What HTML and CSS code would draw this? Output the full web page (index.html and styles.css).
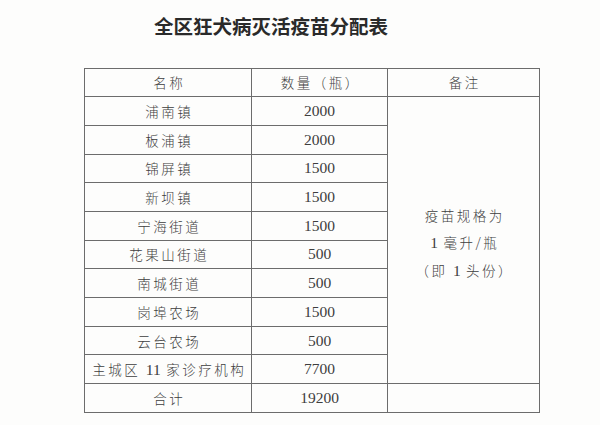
FILE: index.html
```html
<!DOCTYPE html>
<html lang="zh-CN">
<head>
<meta charset="utf-8">
<title>全区狂犬病灭活疫苗分配表</title>
<link rel="stylesheet" href="styles.css">
</head>
<body>
<div class="page">
  <h1 class="title">全区狂犬病灭活疫苗分配表</h1>
  <table class="alloc">
    <colgroup>
      <col class="c-name">
      <col class="c-num">
      <col class="c-note">
    </colgroup>
    <thead>
      <tr><th class="cjk">名称</th><th class="cjk">数量（瓶）</th><th class="cjk">备注</th></tr>
    </thead>
    <tbody>
      <tr><td class="cjk">浦南镇</td><td class="num">2000</td><td class="note" rowspan="10"><div class="note-text"><p>疫苗规格为</p><p><span class="n">1</span> 毫升/瓶</p><p>（即 <span class="n">1</span> 头份）</p></div></td></tr>
      <tr><td class="cjk">板浦镇</td><td class="num">2000</td></tr>
      <tr><td class="cjk">锦屏镇</td><td class="num">1500</td></tr>
      <tr><td class="cjk">新坝镇</td><td class="num">1500</td></tr>
      <tr><td class="cjk">宁海街道</td><td class="num">1500</td></tr>
      <tr><td class="cjk">花果山街道</td><td class="num">500</td></tr>
      <tr><td class="cjk">南城街道</td><td class="num">500</td></tr>
      <tr><td class="cjk">岗埠农场</td><td class="num">1500</td></tr>
      <tr><td class="cjk">云台农场</td><td class="num">500</td></tr>
      <tr><td class="cjk">主城区 <span class="n">11</span> 家诊疗机构</td><td class="num">7700</td></tr>
      <tr><td class="cjk">合计</td><td class="num">19200</td><td></td></tr>
    </tbody>
  </table>
</div>
</body>
</html>
```
FILE: styles.css
```css
html, body {
  margin: 0;
  padding: 0;
  background: #fdfdfc;
}
.page {
  width: 600px;
  height: 425px;
  overflow: hidden;
  color: #3e3e3e;
  font-family: "Noto Sans CJK SC", sans-serif;
}
.title {
  margin: 0;
  padding-top: 12px;
  padding-right: 58px;
  height: 67.5px;
  box-sizing: border-box;
  text-align: center;
  font-size: 19.5px;
  line-height: 28px;
  font-weight: 700;
  color: #2a2a2a;
  letter-spacing: 0;
}
.alloc {
  margin-left: 84px;
  border-collapse: collapse;
  table-layout: fixed;
  width: 455px;
}
.c-name { width: 167px; }
.c-num { width: 136px; }
.c-note { width: 152px; }
.alloc tr { height: 28.7px; }
.alloc th, .alloc td {
  border: 1px solid #6c6c6c;
  padding: 0;
  text-align: center;
  vertical-align: middle;
  font-weight: 300;
}
.cjk {
  font-size: 13.5px;
  letter-spacing: 2.5px;
  text-indent: 2.5px;
}
.num, .n {
  font-family: "Liberation Serif", "Times New Roman", serif;
  font-size: 15.5px;
  letter-spacing: 0;
}
.num { text-indent: 0; }
.note-text {
  font-size: 13.5px;
  letter-spacing: 2.5px;
  text-indent: 2.5px;
  padding-top: 6px;
}
.note-text p {
  margin: 0;
  line-height: 27.5px;
}
```
